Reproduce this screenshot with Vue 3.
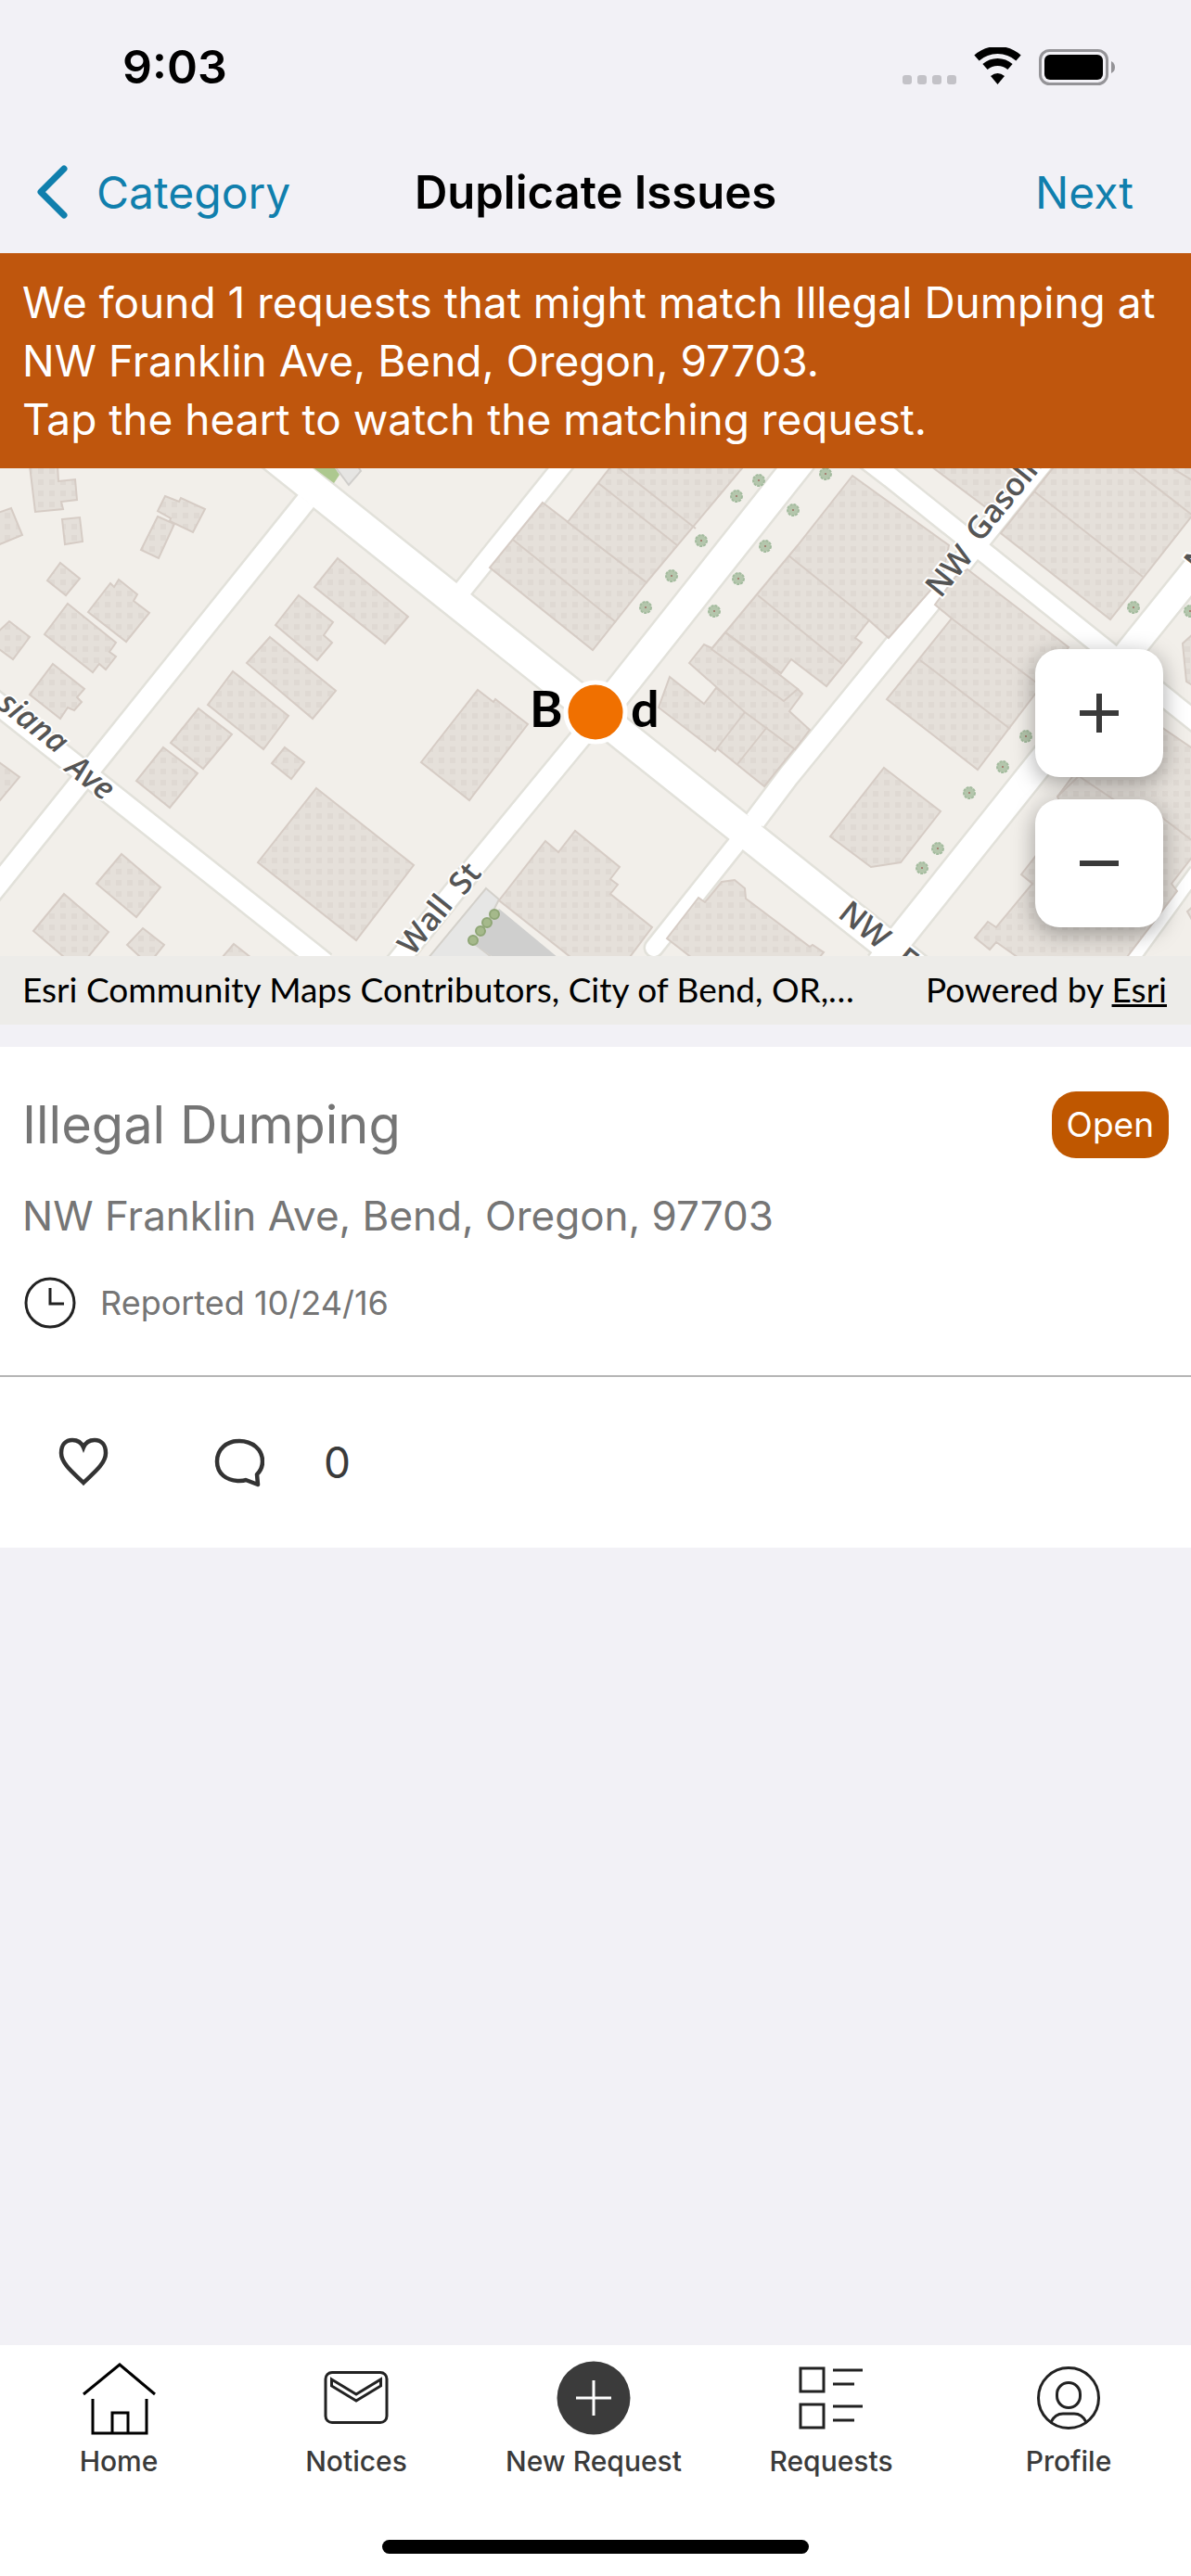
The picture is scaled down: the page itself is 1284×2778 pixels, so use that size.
<script setup>
const roads = [
  { d: 'M280 -20 430 100 800 395 991 547', w: 32 },
  { d: 'M330 40 107 318 -10 464', w: 21 },
  { d: 'M-10 253 350 539', w: 22 },
  { d: 'M612 -5 498 137', w: 19 },
  { d: 'M865 -5 659 255 642 268', w: 30 },
  { d: 'M642 276 503 445 426 540', w: 21 },
  { d: 'M705 522 794 410 814 385', w: 18, round: true },
  { d: 'M814 385 850 337 1003 149 1128 -7', w: 22 },
  { d: 'M922 -14 960 15 1175 187 1295 283', w: 20 },
  { d: 'M948 540 1121 323 1217 203 1295 106', w: 28 },
  { d: 'M1216 541 1290 439', w: 13 },
]

const buildings = [
  '32,2 62,2 63,19 81,17 83,39 66,41 68,49 38,52',
  '-5,54 12,48 24,77 -5,89',
  '67,60 86,58 89,84 70,87',
  '178,35 193,41 195,37 221,49 208,74 183,62 184,59 170,51',
  '170,57 188,65 171,102 152,93',
  '65,107 86,124 71,142 51,126',
  '128,125 148,141 144,148 161,161 136,192 95,160 119,129 123,133',
  '73,151 125,193 118,203 125,208 114,222 107,216 100,225 48,184',
  '10,170 32,187 14,211 -5,197 -5,184',
  '57,216 91,243 83,252 88,257 80,266 73,263 65,275 32,249',
  '-5,319 21,338 -5,369',
  '176,306 213,334 183,371 147,342',
  '214,264 250,292 219,329 184,301',
  '251,224 311,272 284,308 224,260',
  '291,187 362,245 337,275 266,215',
  '322,142 359,171 349,185 358,193 342,212 297,174',
  '364,102 440,165 415,194 339,133',
  '307,306 328,322 314,340 293,323',
  '341,350 446,433 384,514 278,430',
  '131,421 173,457 147,489 104,453',
  '69,464 117,505 90,538 76,538 36,504',
  '154,501 177,519 160,540 137,519',
  '252,518 280,540 233,540',
  '585,42 697,128 639,201 528,112',
  '661,0 612,63 697,128 800,5 804,0',
  '515,244 532,257 534,254 569,281 506,363 454,322',
  '722,230 759,259 772,242 857,307 824,348 773,307 771,310 710,263',
  '743,215 759,195 860,243 865,248 851,267 873,287 857,308 803,268',
  '919,13 1023,88 1016,122 958,188 937,169 922,188 929,193 891,240 853,211 842,226 782,182 767,200 860,88',
  '767,200 782,182 860,243 845,256',
  '588,407 602,419 620,396 668,435 658,448 666,454 658,464 703,500 673,540 625,540 538,471',
  '753,468 760,473 778,451 792,449 803,458 804,469 873,521 876,519 888,527 877,540 755,540 719,512',
  '1043,114 1152,198 1117,247 1054,330 956,254 1026,167 1008,152 1030,122',
  '953,328 1014,375 971,430 939,435 895,402',
  '1000,0 1068,51 1108,0',
  '1139,0 1079,75 1197,168 1290,50 1290,0',
  '1290,180 1275,194 1279,235 1290,242',
  '1140,359 1215,259 1290,310 1290,418 1263,453 1269,461 1209,540 1108,540 1074,516 1067,524 1051,511 1065,494 1074,500 1113,453 1101,443 1150,380',
  '1290,474 1280,483 1290,501',
]

const walls =
  'M553 82 664 171 M645 21 730 88 M661 0 750 70 M803 268 773 307 M827 284 795 324 ' +
  'M850 99 937 169 M817 142 908 216 M782 182 842 226 M1026 167 1117 236 M992 212 1089 286 ' +
  'M1115 30 1232 122 M1214 0 1286 56 M1256 0 1290 21 M1140 359 1163 337 1236 386 M1240 372 1290 410'

const trees = [
  [696, 155], [724, 121], [756, 83], [794, 35], [818, 18], [855, 50], [825, 89], [796, 124], [770, 159],
  [890, 11], [1222, 155], [1283, 159], [1106, 294], [1081, 327], [1045, 355], [1011, 415], [994, 436],
]
const shrubs = [[533, 486], [525, 495], [518, 504], [510, 514]]
</script>

<template>
  <div class="screen">
    <header>
      <div class="status">
        <span class="time">9:03</span>
        <svg class="signals" width="232" height="42" viewBox="0 0 232 42" aria-hidden="true">
          <g fill="#c3c2c7">
            <rect x="3" y="30" width="10" height="10" rx="3" />
            <rect x="19" y="30" width="10" height="10" rx="3" />
            <rect x="35" y="30" width="10" height="10" rx="3" />
            <rect x="51" y="30" width="10" height="10" rx="3" />
          </g>
          <g fill="none" stroke="#000" stroke-width="8">
            <path d="M83 11.500a34 34 0 0 1 45 0" />
            <path d="M92 21a20.500 20.500 0 0 1 27 0" />
          </g>
          <path d="M98 31q7.500-6 15 0l-7.500 9Z" />
          <rect x="151.500" y="3.500" width="72" height="36" rx="10" fill="none" stroke="#949397" stroke-width="3" />
          <rect x="156" y="8" width="63" height="27" rx="6" />
          <path d="M228 15q4 2 4 6.500t-4 6.500Z" fill="#949397" />
        </svg>
      </div>
      <nav class="navbar">
        <button class="link back">
          <svg width="34" height="58" viewBox="0 0 34 58" aria-hidden="true">
            <path d="M29 4 4 29l25 25" fill="none" stroke="currentColor" stroke-width="7" stroke-linecap="round" stroke-linejoin="round" />
          </svg>
          Category
        </button>
        <h1>Duplicate Issues</h1>
        <button class="link next">Next</button>
      </nav>
    </header>

    <main>
      <p class="banner">
        We found 1 requests that might match Illegal Dumping at NW Franklin Ave, Bend, Oregon, 97703.<br />
        Tap the heart to watch the matching request.
      </p>

      <section class="map" aria-label="Map">
        <svg class="canvas" viewBox="0 5 1284 526" preserveAspectRatio="xMidYMid slice">
          <defs>
            <pattern id="dots" width="12" height="12" patternUnits="userSpaceOnUse">
              <rect width="12" height="12" fill="#e5e0da" />
              <rect x="5" y="5" width="6" height="6" fill="#dfd9d3" />
            </pattern>
            <g id="tree">
              <circle r="6" fill="#b4c6ac" stroke="#a3bb9e" stroke-width="2" stroke-dasharray="3 1" />
              <circle r="1" fill="#a06a60" />
            </g>
          </defs>
          <rect y="0" width="1284" height="540" fill="#f2efea" />
          <g fill="none" stroke="#e2e1da">
            <path v-for="r in roads" :key="r.d" :d="r.d" :stroke-width="r.w + 5" :stroke-linecap="r.round ? 'round' : 'butt'" />
          </g>
          <g fill="none" stroke="#fff">
            <path v-for="r in roads" :key="r.d" :d="r.d" :stroke-width="r.w" :stroke-linecap="r.round ? 'round' : 'butt'" />
          </g>
          <path d="M336 3 360 21 366 12 360 3Z" fill="#adc88f" />
          <path d="M361 3 376 23 389 8 386 3Z" fill="#e6e5e3" stroke="#d0cecb" stroke-width="2" />
          <path d="M524 458 538 470 513 519 540 540H456Z" fill="#e6e6e5" stroke="#d3d0ca" stroke-width="2" />
          <path d="M538 480 608 538H540L513 519Z" fill="#cfcfce" />
          <g fill="url(#dots)" stroke="#d6ccc5" stroke-width="2">
            <polygon v-for="b in buildings" :key="b" :points="b" />
            <path :d="walls" fill="none" />
          </g>
          <use v-for="t in trees" :key="t[0]" href="#tree" :x="t[0]" :y="t[1]" />
          <circle v-for="s in shrubs" :key="s[0]" :cx="s[0]" :cy="s[1]" r="5" fill="#a5b98b" stroke="#8fa676" stroke-width="2" />
          <g class="street">
            <text class="slanted" text-anchor="end" transform="translate(62 314) rotate(38)">siana</text>
            <text class="slanted" transform="translate(69 331) rotate(38)">Ave</text>
            <text transform="translate(445 532) rotate(-51)">Wall</text>
            <text transform="translate(500 467) rotate(-51)">St</text>
            <text transform="translate(1014 146) rotate(-51)">NW</text>
            <text transform="translate(1057 86) rotate(-51)">Gasolin</text>
            <text transform="translate(902 488) rotate(39)">NW</text>
            <text transform="translate(963 538) rotate(39)">F</text>
            <text transform="translate(1293 119) rotate(-51)">N</text>
          </g>
          <g class="city">
            <text x="571" y="284">B</text>
            <text x="680" y="284">d</text>
          </g>
          <circle cx="642" cy="268" r="32" fill="#f07000" stroke="#fff" stroke-width="5" />
        </svg>
        <div class="zoom">
          <button aria-label="Zoom in">
            <svg width="42" height="42" viewBox="0 0 42 42"><path d="M0 21h42M21 0v42" stroke="#3a3a3a" stroke-width="6" /></svg>
          </button>
          <button aria-label="Zoom out">
            <svg width="42" height="42" viewBox="0 0 42 42"><path d="M0 21h42" stroke="#3a3a3a" stroke-width="6" /></svg>
          </button>
        </div>
        <div class="credits">
          <span>Esri Community Maps Contributors, City of Bend, OR,…</span>
          <span>Powered by <a href="#">Esri</a></span>
        </div>
      </section>

      <article class="card">
        <div class="details">
          <div class="heading">
            <h2>Illegal Dumping</h2>
            <span class="badge">Open</span>
          </div>
          <p class="address">NW Franklin Ave, Bend, Oregon, 97703</p>
          <p class="reported">
            <svg width="58" height="56" viewBox="0 0 58 56" fill="none" stroke="#222" stroke-width="3" aria-hidden="true">
              <circle cx="30" cy="28" r="26" />
              <path d="M30 12v17h15" />
            </svg>
            Reported 10/24/16
          </p>
        </div>
        <div class="actions">
          <button aria-label="Watch">
            <svg width="54" height="54" viewBox="0 0 54 54" fill="none" stroke="#333" stroke-width="4.500">
              <path d="M27 49C18 40 3 29 3 17 3 8 8 3 15 3c6 0 10 3 12 8 2-5 6-8 12-8 7 0 12 5 12 14 0 12-15 23-24 32Z" />
            </svg>
          </button>
          <button aria-label="Comments">
            <svg width="54" height="54" viewBox="0 0 54 54" fill="none" stroke="#333" stroke-width="4.500" stroke-linejoin="round">
              <path d="M46 40c4-4 6-9 6-14C52 13 41 4 27 4S3 13 3 26s10 21 24 21c3 0 5 0 7-1l13 5Z" />
            </svg>
            <span>0</span>
          </button>
        </div>
      </article>
    </main>

    <footer>
      <nav class="tabs">
        <a href="#">
          <svg width="80" height="80" viewBox="0 0 80 80" fill="none" stroke="#000" stroke-width="3">
            <path d="M2 36 41 4l38 32M12 41v37h58V41M33 78V56h17v22" />
          </svg>
          Home
        </a>
        <a href="#">
          <svg width="80" height="80" viewBox="0 0 80 80" fill="none" stroke="#222" stroke-width="3">
            <rect x="7" y="12.500" width="66" height="54" rx="7" />
            <path d="M13.500 20 40 36l26.500-16v7L40 43 13.500 27Z" />
          </svg>
          Notices
        </a>
        <a href="#">
          <svg width="80" height="80" viewBox="0 0 80 80" fill="none" stroke="#fff" stroke-width="3">
            <circle cx="40" cy="40" r="39.500" fill="#3b3b3b" stroke="none" />
            <path d="M21 40h38M40 21v38" />
          </svg>
          New Request
        </a>
        <a href="#">
          <svg width="80" height="80" viewBox="0 0 80 80" fill="none" stroke="#222" stroke-width="3">
            <path d="M7 8h25v25H7ZM7 47h25v25H7ZM42 10h32M42 25h23M42 49h32M42 64h23" />
          </svg>
          Requests
        </a>
        <a href="#">
          <svg width="80" height="80" viewBox="0 0 80 80" fill="none" stroke="#222" stroke-width="3">
            <circle cx="40" cy="40" r="32.500" />
            <rect x="27.500" y="23.500" width="25" height="27" rx="12.500" />
            <path d="M21 66c3-6 8-9 13-9h12c5 0 10 3 13 9" />
          </svg>
          Profile
        </a>
      </nav>
      <div class="indicator"></div>
    </footer>
  </div>
</template>

<style>
body {
  background: #f2f1f6;
}
</style>

<style scoped>
.screen {
  min-height: 100vh;
  display: flex;
  flex-direction: column;
  background: #f2f1f6;
  font-family: Inter, "Liberation Sans", sans-serif;
  color: #000;
}
h1,
h2,
p {
  margin: 0;
  font-weight: 400;
}
button {
  font: inherit;
  color: inherit;
  background: none;
  border: 0;
  padding: 0;
}
svg {
  display: block;
  flex: none;
}
.status {
  display: flex;
  justify-content: space-between;
  align-items: center;
  height: 144px;
  padding: 0 82px 0 132px;
  box-sizing: border-box;
}
.time {
  font-size: 50px;
  font-weight: 600;
}
.navbar {
  display: grid;
  grid-template-columns: 1fr auto 1fr;
  align-items: center;
  height: 129px;
  box-sizing: border-box;
  padding: 0 62px 3px 40px;
}
.link {
  color: #107fad;
  font-size: 48px;
}
.back {
  justify-self: start;
  display: flex;
  align-items: center;
  gap: 30px;
}
.next {
  justify-self: end;
}
h1 {
  padding-left: 22px;
  font-size: 49px;
  font-weight: 600;
}
main {
  flex: 1;
}
.banner {
  padding: 22px 24px 21px;
  background: #bf560d;
  color: #fff;
  font-size: 46px;
  line-height: 63px;
}
.map {
  position: relative;
}
.canvas {
  width: 100%;
  height: 526px;
}
.street {
  font: 600 34px "Open Sans", sans-serif;
  fill: #555;
  stroke: #fff;
  stroke-width: 4px;
  paint-order: stroke;
}
.slanted {
  font-style: italic;
}
.city {
  font: 700 54px Lato, sans-serif;
  fill: #000;
}
.zoom {
  position: absolute;
  right: 30px;
  bottom: 105px;
  display: flex;
  flex-direction: column;
  gap: 24px;
}
.zoom button {
  display: flex;
  align-items: center;
  justify-content: center;
  width: 138px;
  height: 138px;
  border-radius: 26px;
  background: #fff;
  box-shadow: 0 6px 24px rgba(0, 0, 0, 0.35);
}
.credits {
  display: flex;
  justify-content: space-between;
  align-items: center;
  height: 74px;
  padding: 0 26px 4px 24px;
  box-sizing: border-box;
  background: #edece9;
  font-family: Lato, sans-serif;
  font-size: 37px;
}
.credits a {
  color: inherit;
}
.card {
  margin-top: 24px;
  background: #fff;
  color: #757575;
}
.details {
  padding: 48px 24px 50px;
  border-bottom: 2px solid #b5b5b5;
}
.heading {
  display: flex;
  justify-content: space-between;
  align-items: center;
}
h2 {
  font-size: 56px;
  line-height: 72px;
}
.badge {
  padding: 0 16px;
  border-radius: 26px;
  background: #bf5700;
  color: #fff;
  font-size: 37px;
  line-height: 72px;
}
.address {
  margin-top: 32px;
  font-size: 44px;
  line-height: 60px;
}
.reported {
  display: flex;
  align-items: center;
  gap: 26px;
  margin-top: 36px;
  font-size: 36px;
}
.actions {
  display: flex;
  align-items: center;
  gap: 114px;
  height: 184px;
  padding: 0 63px;
  color: #3a3a3a;
  font-size: 46px;
}
.actions button {
  display: flex;
  align-items: center;
  gap: 64px;
}
footer {
  background: #fff;
}
.tabs {
  display: flex;
  padding: 17px 4px 0 0;
}
.tabs a {
  flex: 1;
  display: flex;
  flex-direction: column;
  align-items: center;
  gap: 10px;
  color: #3a3a3a;
  font-size: 30px;
  font-weight: 500;
  line-height: 36px;
  text-decoration: none;
}
.indicator {
  width: 460px;
  height: 15px;
  margin: 67px auto 24px;
  border-radius: 8px;
  background: #000;
}
</style>
